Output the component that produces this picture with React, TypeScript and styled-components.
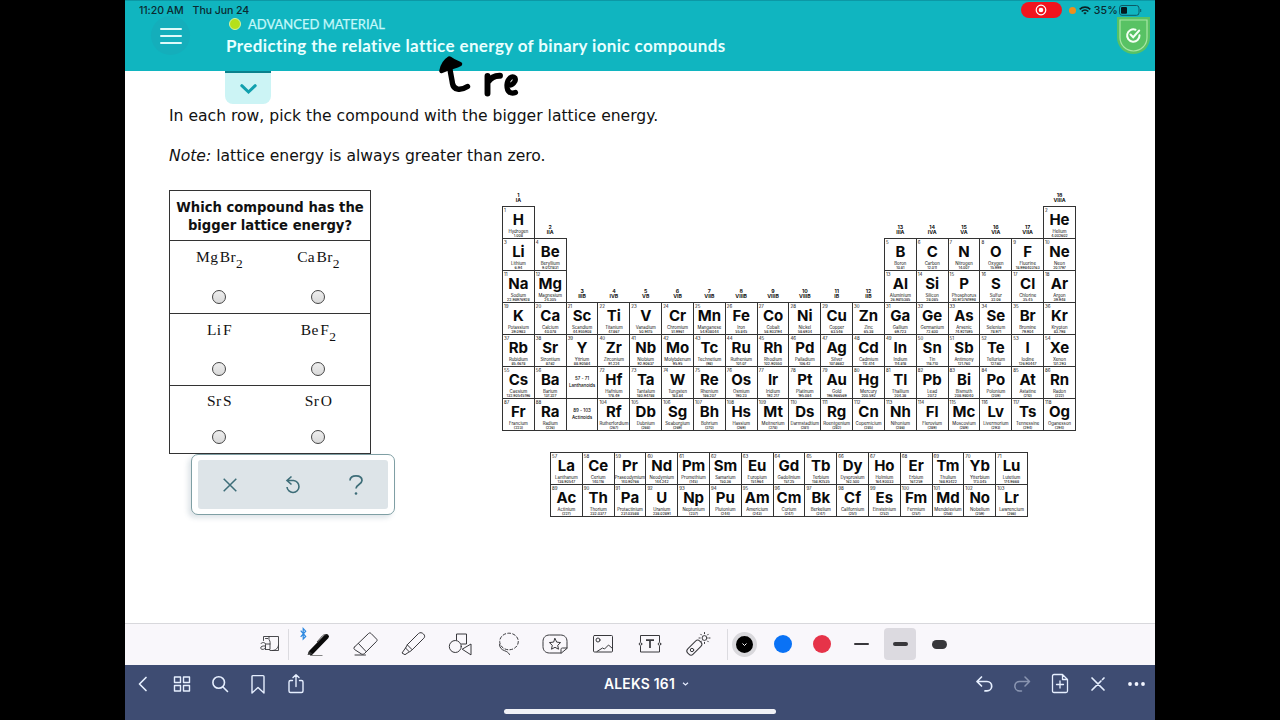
import React from 'react';
import styled, { createGlobalStyle } from 'styled-components';

const GlobalStyle = createGlobalStyle`
  * { box-sizing: border-box; }
  body { margin: 0; background: #000; }
  svg { display: block; overflow: visible; }
`;

const Screen = styled.div`
  width: 1280px;
  height: 720px;
  background: #000;
  display: flex;
  justify-content: center;
  overflow: hidden;
`;

const Tablet = styled.div`
  position: relative;
  width: 1030px;
  height: 720px;
  background: #fff;
  display: flex;
  flex-direction: column;
`;

/* ---------- header ---------- */

const Header = styled.header`
  height: 71px;
  flex: none;
  background: #10b5c0;
  border-top: 1px solid #0c98a5;
  color: #fff;
  font-family: Lato, sans-serif;
`;

const StatusBar = styled.div`
  display: flex;
  align-items: center;
  height: 18px;
  padding: 0 13px 0 14px;
  font: 500 10.6px Inter, sans-serif;
  letter-spacing: -0.1px;
  color: #0b2a30;
`;

const StatusDate = styled.span`
  margin-left: 9px;
  flex: 1;
`;

const RecordPill = styled.span`
  width: 41px;
  height: 16px;
  border-radius: 8px;
  background: #f0141e;
  display: flex;
  align-items: center;
  justify-content: center;
  margin-right: 7px;
`;

const MicDot = styled.span`
  width: 7px;
  height: 7px;
  border-radius: 50%;
  background: #ee8f1c;
  margin-right: 3px;
`;

const BatteryText = styled.span`
  margin: 0 1px 0 3px;
  letter-spacing: 0.2px;
`;

const TitleRow = styled.div`
  display: flex;
  margin-top: -2px;
  padding: 0 5px 0 26px;
`;

const MenuButton = styled.div`
  width: 39px;
  height: 39px;
  margin-top: -1px;
  border-radius: 50%;
  background: #14aebb;
  display: flex;
  flex-direction: column;
  align-items: center;
  justify-content: center;
  gap: 5px;
`;

const MenuLine = styled.span`
  width: 22px;
  height: 2px;
  border-radius: 1px;
  background: #dffafa;
`;

const Titles = styled.div`
  flex: 1;
  margin-left: 36px;
  padding-top: 0;
`;

const Kicker = styled.div`
  display: flex;
  align-items: center;
  height: 14px;
  padding-left: 3px;
  font-size: 13px;
  letter-spacing: 0;
  color: #c4f8fa;
  -webkit-text-stroke: 0.25px #c4f8fa;
`;

const LevelDot = styled.span`
  width: 12px;
  height: 12px;
  border-radius: 50%;
  background: #b5e01b;
  border: 1px solid #d5f3a0;
  margin-right: 7px;
`;

const Topic = styled.div`
  margin-top: 5px;
  font-size: 17px;
  line-height: 20px;
  font-weight: 700;
  letter-spacing: 0.37px;
  white-space: nowrap;
  color: #e8ffff;
`;

/* ---------- exercise ---------- */

const Exercise = styled.main`
  flex: 1;
  min-height: 0;
  padding-left: 44px;
  font-family: 'DejaVu Sans', Verdana, sans-serif;
  color: #111;
`;

const TopicTab = styled.div`
  width: 46px;
  height: 33px;
  margin-left: 56px;
  border-top: 2px solid #0b808c;
  border-radius: 0 0 8px 8px;
  background: #ccf4f5;
  display: flex;
  justify-content: center;
  padding-top: 11px;
`;

const Prompt = styled.p<{ $top: number }>`
  margin: ${(p) => p.$top}px 0 0;
  font-size: 15.6px;
  line-height: 20px;
  white-space: nowrap;
`;

const Work = styled.div`
  display: flex;
  align-items: flex-start;
  margin-top: 24px;
`;

const AnswerArea = styled.div`
  width: 333px;
  flex: none;
`;

const Question = styled.div`
  width: 202px;
  border: 1px solid #333;
`;

const QuestionHead = styled.div`
  height: 49px;
  padding-top: 8px;
  text-align: center;
  font-weight: 700;
  font-size: 13.2px;
  line-height: 18px;
  white-space: nowrap;
`;

const ChoiceRow = styled.div<{ $height: number; $pad: number }>`
  display: grid;
  grid-template-columns: 1fr 1fr;
  height: ${(p) => p.$height}px;
  padding: ${(p) => p.$pad}px 2px 0 0;
  border-top: 1px solid #333;
`;

const Choice = styled.label`
  display: flex;
  flex-direction: column;
  align-items: center;
  justify-content: space-between;
  padding-bottom: 9px;
`;

const Formula = styled.span`
  height: 22px;
  font: 15.5px/20px 'Liberation Serif', serif;
  letter-spacing: 0.3px;
  word-spacing: -2.6px;
  white-space: nowrap;
  display: flex;
  color: #111;
`;

const Subscript = styled.span`
  font-size: 13.5px;
  position: relative;
  top: 7px;
`;

const Radio = styled.span`
  width: 14px;
  height: 14px;
  margin-right: 1px;
  border-radius: 50%;
  border: 1px solid #444;
  background: linear-gradient(#eee, #d9d9d9);
`;

const Actions = styled.div`
  width: 204px;
  height: 61px;
  margin: 0 0 0 22px;
  padding: 5px 6px;
  border: 1px solid #7f9fa4;
  border-radius: 7px;
  background: #fff;
  box-shadow: -3px 3px 5px rgba(90, 120, 140, 0.2);
`;

const ActionsInner = styled.div`
  height: 49px;
  border-radius: 3px;
  background: #dde4e8;
  display: flex;
  align-items: center;
  justify-content: space-between;
  padding: 0 25px;
`;

/* ---------- periodic table ---------- */

const Tables = styled.div`
  padding-top: 1px;
  font-family: Inter, 'Liberation Sans', sans-serif;
`;

const MainTable = styled.div`
  display: grid;
  grid-template-columns: repeat(18, 31.83px);
  grid-template-rows: 15px repeat(7, 32.03px);
`;

const SeriesTable = styled.div`
  display: grid;
  grid-template-columns: repeat(15, 31.8px);
  grid-template-rows: repeat(2, 32px);
  margin: 22px 0 0 48px;
`;

const Cell = styled.div<{ $row: number; $col: number }>`
  grid-row: ${(p) => p.$row};
  grid-column: ${(p) => p.$col};
  position: relative;
  margin: 0 -1px -1px 0;
  border: 1px solid #333;
  display: flex;
  flex-direction: column;
  align-items: center;
  white-space: nowrap;
  color: #0a0a0a;
`;

const AtomicNumber = styled.span`
  position: absolute;
  left: 1px;
  top: 1px;
  font-size: 4.4px;
  line-height: 5px;
`;

const Sym = styled.span`
  margin: 6px 0 3px;
  font-size: 15px;
  line-height: 13px;
  font-weight: 650;
`;

const ElementName = styled.span`
  font-size: 4.3px;
  line-height: 5px;
`;

const Mass = styled.span`
  font-size: 3.5px;
  line-height: 4px;
  font-weight: 500;
`;

const RangeNote = styled.span`
  margin: auto;
  font-size: 4.5px;
  line-height: 6.2px;
  font-weight: 500;
  text-align: center;
`;

const GroupLabel = styled.div<{ $row: number; $col: number }>`
  grid-row: ${(p) => p.$row};
  grid-column: ${(p) => p.$col};
  align-self: end;
  padding: 0 0 2px 1px;
  text-align: center;
  font-size: 5.2px;
  line-height: 5.6px;
  font-weight: 700;
  color: #111;
`;

type Entry = { n: string; sym: string; name: string; mass: string; row: number; col: number };

function period(row: number, col: number, list: string): Entry[] {
  return list.split(';').map((s, i) => {
    const [n, sym, name, mass] = s.split(',');
    return { n, sym, name, mass, row, col: col + i };
  });
}

const mainElements: Entry[] = [
  ...period(2, 1, '1,H,Hydrogen,1.008'),
  ...period(2, 18, '2,He,Helium,4.002602'),
  ...period(3, 1, '3,Li,Lithium,6.94;4,Be,Beryllium,9.0121831'),
  ...period(3, 13, '5,B,Boron,10.81;6,C,Carbon,12.011;7,N,Nitrogen,14.007;8,O,Oxygen,15.999;9,F,Fluorine,18.998403163;10,Ne,Neon,20.1797'),
  ...period(4, 1, '11,Na,Sodium,22.98976928;12,Mg,Magnesium,24.305'),
  ...period(4, 13, '13,Al,Aluminium,26.9815385;14,Si,Silicon,28.085;15,P,Phosphorus,30.973761998;16,S,Sulfur,32.06;17,Cl,Chlorine,35.45;18,Ar,Argon,39.948'),
  ...period(5, 1, '19,K,Potassium,39.0983;20,Ca,Calcium,40.078;21,Sc,Scandium,44.955908;22,Ti,Titanium,47.867;23,V,Vanadium,50.9415;24,Cr,Chromium,51.9961;25,Mn,Manganese,54.938044;26,Fe,Iron,55.845;27,Co,Cobalt,58.933194;28,Ni,Nickel,58.6934;29,Cu,Copper,63.546;30,Zn,Zinc,65.38;31,Ga,Gallium,69.723;32,Ge,Germanium,72.630;33,As,Arsenic,74.921595;34,Se,Selenium,78.971;35,Br,Bromine,79.904;36,Kr,Krypton,83.798'),
  ...period(6, 1, '37,Rb,Rubidium,85.4678;38,Sr,Strontium,87.62;39,Y,Yttrium,88.90584;40,Zr,Zirconium,91.224;41,Nb,Niobium,92.90637;42,Mo,Molybdenum,95.95;43,Tc,Technetium,(98);44,Ru,Ruthenium,101.07;45,Rh,Rhodium,102.90550;46,Pd,Palladium,106.42;47,Ag,Silver,107.8682;48,Cd,Cadmium,112.414;49,In,Indium,114.818;50,Sn,Tin,118.710;51,Sb,Antimony,121.760;52,Te,Tellurium,127.60;53,I,Iodine,126.90447;54,Xe,Xenon,131.293'),
  ...period(7, 1, '55,Cs,Caesium,132.90545196;56,Ba,Barium,137.327'),
  ...period(7, 4, '72,Hf,Hafnium,178.49;73,Ta,Tantalum,180.94788;74,W,Tungsten,183.84;75,Re,Rhenium,186.207;76,Os,Osmium,190.23;77,Ir,Iridium,192.217;78,Pt,Platinum,195.084;79,Au,Gold,196.966569;80,Hg,Mercury,200.592;81,Tl,Thallium,204.38;82,Pb,Lead,207.2;83,Bi,Bismuth,208.98040;84,Po,Polonium,(209);85,At,Astatine,(210);86,Rn,Radon,(222)'),
  ...period(8, 1, '87,Fr,Francium,(223);88,Ra,Radium,(226)'),
  ...period(8, 4, '104,Rf,Rutherfordium,(267);105,Db,Dubnium,(268);106,Sg,Seaborgium,(269);107,Bh,Bohrium,(270);108,Hs,Hassium,(269);109,Mt,Meitnerium,(278);110,Ds,Darmstadtium,(281);111,Rg,Roentgenium,(282);112,Cn,Copernicium,(285);113,Nh,Nihonium,(286);114,Fl,Flerovium,(289);115,Mc,Moscovium,(289);116,Lv,Livermorium,(293);117,Ts,Tennessine,(294);118,Og,Oganesson,(294)'),
];

const seriesElements: Entry[] = [
  ...period(1, 1, '57,La,Lanthanum,138.90547;58,Ce,Cerium,140.116;59,Pr,Praseodymium,140.90766;60,Nd,Neodymium,144.242;61,Pm,Promethium,(145);62,Sm,Samarium,150.36;63,Eu,Europium,151.964;64,Gd,Gadolinium,157.25;65,Tb,Terbium,158.92535;66,Dy,Dysprosium,162.500;67,Ho,Holmium,164.93033;68,Er,Erbium,167.259;69,Tm,Thulium,168.93422;70,Yb,Ytterbium,173.045;71,Lu,Lutetium,174.9668'),
  ...period(2, 1, '89,Ac,Actinium,(227);90,Th,Thorium,232.0377;91,Pa,Protactinium,231.03588;92,U,Uranium,238.02891;93,Np,Neptunium,(237);94,Pu,Plutonium,(244);95,Am,Americium,(243);96,Cm,Curium,(247);97,Bk,Berkelium,(247);98,Cf,Californium,(251);99,Es,Einsteinium,(252);100,Fm,Fermium,(257);101,Md,Mendelevium,(258);102,No,Nobelium,(259);103,Lr,Lawrencium,(266)'),
];

const groups: [number, string, number][] = [
  [1, 'IA', 1], [2, 'IIA', 2], [3, 'IIIB', 4], [4, 'IVB', 4], [5, 'VB', 4], [6, 'VIB', 4],
  [7, 'VIIB', 4], [8, 'VIIIB', 4], [9, 'VIIIB', 4], [10, 'VIIIB', 4], [11, 'IB', 4], [12, 'IIB', 4],
  [13, 'IIIA', 2], [14, 'IVA', 2], [15, 'VA', 2], [16, 'VIA', 2], [17, 'VIIA', 2], [18, 'VIIIA', 1],
];

const ElementCell = ({ e }: { e: Entry }) => (
  <Cell $row={e.row} $col={e.col}>
    <AtomicNumber>{e.n}</AtomicNumber>
    <Sym>{e.sym}</Sym>
    <ElementName>{e.name}</ElementName>
    <Mass>{e.mass}</Mass>
  </Cell>
);

const PeriodicTable = () => (
  <Tables>
    <MainTable>
      {groups.map(([n, roman, row]) => (
        <GroupLabel key={n} $row={row} $col={n}>{n}<br />{roman}</GroupLabel>
      ))}
      {mainElements.map((e) => <ElementCell key={e.n} e={e} />)}
      <Cell $row={7} $col={3}><RangeNote>57 - 71<br />Lanthanoids</RangeNote></Cell>
      <Cell $row={8} $col={3}><RangeNote>89 - 103<br />Actinoids</RangeNote></Cell>
    </MainTable>
    <SeriesTable>
      {seriesElements.map((e) => <ElementCell key={e.n} e={e} />)}
    </SeriesTable>
  </Tables>
);

/* ---------- drawing toolbar ---------- */

const ToolBar = styled.div`
  height: 42px;
  flex: none;
  border-top: 1px solid #d8d8dc;
  background: #f9f7fb;
  display: flex;
  align-items: center;
  padding: 0 0 1px 121px;
`;

const Tool = styled.div<{ $width?: number }>`
  width: ${(p) => p.$width ?? 47.5}px;
  height: 40px;
  display: flex;
  align-items: center;
  justify-content: center;
  flex: none;
`;

const Divider = styled.span<{ $left: number; $right: number }>`
  width: 1px;
  height: 31px;
  flex: none;
  margin: 0 ${(p) => p.$right}px 0 ${(p) => p.$left}px;
  background: #dcdbe0;
`;

const Swatch = styled.span<{ $color: string; $selected?: boolean }>`
  width: ${(p) => (p.$selected ? 25 : 18)}px;
  height: ${(p) => (p.$selected ? 25 : 18)}px;
  border-radius: 50%;
  border: ${(p) => (p.$selected ? '4px solid #d9d8dc' : '0')};
  background: ${(p) => p.$color};
  display: flex;
  align-items: center;
  justify-content: center;
`;

const WidthButton = styled.span<{ $selected?: boolean }>`
  width: 32px;
  height: 32px;
  border-radius: 4px;
  background: ${(p) => (p.$selected ? '#dcdae0' : 'transparent')};
  display: flex;
  align-items: center;
  justify-content: center;
`;

const Stroke = styled.span<{ $size: number }>`
  width: 15px;
  height: ${(p) => p.$size}px;
  border-radius: ${(p) => p.$size / 2}px;
  background: #38373b;
`;

const thin = { fill: 'none', stroke: '#38383c', strokeWidth: 1, strokeLinecap: 'round', strokeLinejoin: 'round' } as const;

const ZoomWindowIcon = () => (
  <svg width="20" height="20" viewBox="0 0 20 20" {...thin} strokeWidth="0.9">
    <path d="M3.500 6.500V2.500H18.500V16.500H10" />
    <path d="M12.500 16.500c3 0 6-2.500 6-5.500" />
    <path d="M1 9.500c.8-1.500 4.500-1.500 4.500 1v5M5.500 12c-3-.3-4.800.4-4.800 2 0 2 4.200 2 4.800-.4M5.500 4.500h2.500c2 1.500 2.300 3.500 2 5.500v5.500h-4.500M5.500 10h4.500M9 4.500V2.500" />
  </svg>
);

const PenIcon = () => (
  <svg width="34" height="36" viewBox="0 0 34 36">
    <path d="M-.3 4.700l5 5.800L2.200 13V2.500l2.500 2.700-5 5.600" fill="none" stroke="#2a87e0" strokeWidth="1.200" />
    <path d="M10 26.500L25.500 10.500" stroke="#0a0a0a" strokeWidth="4.800" strokeLinecap="round" />
    <path d="M6.500 29l1.500-4 4 3z" fill="#333" />
    <path d="M16 16l5.500-6.200c1-1 2.500-1.300 4-.8" fill="none" stroke="#444" strokeWidth="1" />
    <path d="M9 29.500H21.500" stroke="#777" strokeWidth="0.900" />
  </svg>
);

const EraserIcon = () => (
  <svg width="26" height="26" viewBox="0 0 26 26" {...thin}>
    <path d="M2.500 16L16.500 2.500c.8-.8 1.800-.8 2.600 0L24.500 8c.8.800.8 1.600 0 2.400L12.500 22.500c-1.200 1-2.400 1-3.500.2L2.500 18.500c-.8-.8-.8-1.700 0-2.500zM6.500 12.500l7.500 8M3 24H13.500" />
  </svg>
);

const HighlighterIcon = () => (
  <svg width="26" height="26" viewBox="0 0 26 26" {...thin}>
    <path d="M7.500 13.500L18.500 2.500c1.500-1.300 3.500-1 5 .5 1.500 1.500 1.500 3 .3 4.200L12.500 18.500zM7.500 13.500l-2 3.500 4 4 3-2.500M5.500 17l-3.500 5 3 1.700 4-2.700" />
  </svg>
);

const ShapesIcon = () => (
  <svg width="24" height="24" viewBox="0 0 24 24" {...thin}>
    <path d="M8.500 8V2H18.500V12H13.500" />
    <circle cx="7.300" cy="14.500" r="6" />
    <path d="M14.500 17l8.500-5v10.500z" />
  </svg>
);

const LassoIcon = () => (
  <svg width="22" height="24" viewBox="0 0 22 24" {...thin}>
    <ellipse cx="12" cy="9.500" rx="9.300" ry="8.300" strokeDasharray="2.800 2.200" />
    <path d="M2.500 12.500c0 3 1.800 5 5 6.200 2.500.8 4 2 5 3.800" />
  </svg>
);

const StickerIcon = () => (
  <svg width="26" height="22" viewBox="0 0 26 22" {...thin}>
    <path d="M19 20H7.500C3.500 20 1 17.500 1 13.500v-5C1 4.500 3.500 2 7.500 2h11C22.500 2 25 4.500 25 8.500V15zM19 20v-3.500c0-1 .5-1.500 1.500-1.500H25" />
    <path d="M13 5.500l1.700 3.600 3.900.5-2.900 2.700.8 3.900-3.500-1.900-3.500 1.900.8-3.900-2.900-2.700 3.900-.5z" />
  </svg>
);

const ImageIcon = () => (
  <svg width="22" height="20" viewBox="0 0 22 20" {...thin}>
    <rect x="1.500" y="1.500" width="19" height="16.500" rx="1" />
    <circle cx="6" cy="6" r="2" />
    <path d="M5 17.500l5.500-3.500 2 1 4-4 4 3.500" />
  </svg>
);

const TextIcon = () => (
  <svg width="24" height="20" viewBox="0 0 24 20" {...thin}>
    <path d="M2.500 7.500V1.500H21.500V7.500M2.500 12.500V18H21.500V12.500" />
    <circle cx="2.500" cy="10" r="1.300" />
    <circle cx="21.500" cy="10" r="1.300" />
    <path d="M8 6.200H16M12 6.200V14" strokeWidth="1.700" strokeLinecap="butt" />
  </svg>
);

const LaserIcon = () => (
  <svg width="26" height="26" viewBox="0 0 26 26" {...thin}>
    <rect x="-8" y="-3.800" width="17" height="7.600" rx="3" transform="translate(9 17) rotate(-45)" />
    <circle cx="7" cy="19" r="1.700" />
    <circle cx="19.500" cy="7" r="2.400" />
    <path d="M19.500 1.500v1.200M19.500 11.300v1.200M14 7h1.200M23.800 7H25M15.700 3.200l.8.800M22.500 10l.8.800M15.700 10.800l.8-.8M22.500 4l.8-.8" />
  </svg>
);

/* ---------- navigation bar ---------- */

const NavBar = styled.nav`
  height: 55px;
  flex: none;
  background: #3e4c72;
  display: flex;
  flex-direction: column;
  align-items: center;
`;

const NavRow = styled.div`
  width: 100%;
  height: 38px;
  display: grid;
  grid-template-columns: 1fr auto 1fr;
  align-items: center;
`;

const NavGroup = styled.div<{ $end?: boolean }>`
  display: flex;
  justify-content: ${(p) => (p.$end ? 'flex-end' : 'flex-start')};
`;

const NavButton = styled.span<{ $dim?: boolean }>`
  width: 38px;
  height: 38px;
  display: flex;
  align-items: center;
  justify-content: center;
  opacity: ${(p) => (p.$dim ? 0.45 : 1)};
`;

const DocumentTitle = styled.div`
  display: flex;
  align-items: center;
  gap: 7px;
  padding-left: 13px;
  font: 600 13.8px Inter, sans-serif;
  letter-spacing: 0.25px;
  color: #fff;
  white-space: nowrap;
`;

const HomeIndicator = styled.span`
  width: 272px;
  height: 5px;
  margin-top: 6px;
  border-radius: 3px;
  background: #f0f1f6;
`;

const NavIcon = ({ d, width = 1.4 }: { d: string; width?: number }) => (
  <svg width="20" height="22" viewBox="0 0 20 22" fill="none" stroke="#e6efff" strokeWidth={width} strokeLinecap="round" strokeLinejoin="round">
    <path d={d} />
  </svg>
);

/* ---------- handwriting ---------- */

const Ink = styled.svg`
  position: absolute;
  left: 310px;
  top: 50px;
`;

const Compound = ({ text, sub }: { text: string; sub?: string }) => (
  <Choice>
    <Formula>{text}{sub && <Subscript>{sub}</Subscript>}</Formula>
    <Radio />
  </Choice>
);

export default function App() {
  return (
    <Screen>
      <GlobalStyle />
      <Tablet>
        <Header>
          <StatusBar>
            <span>11:20 AM</span>
            <StatusDate>Thu Jun 24</StatusDate>
            <RecordPill>
              <svg width="12" height="12" viewBox="0 0 12 12">
                <circle cx="6" cy="6" r="4.800" fill="none" stroke="#fff" strokeWidth="1.200" />
                <circle cx="6" cy="6" r="2.300" fill="#fff" />
              </svg>
            </RecordPill>
            <MicDot />
            <svg width="12" height="9" viewBox="0 0 12 9" fill="none" stroke="#0b2024" strokeWidth="1.700">
              <path d="M.7 3.300c3-2.900 7.600-2.900 10.600 0M2.700 5.500c1.900-1.800 4.700-1.800 6.600 0" />
              <path d="M6 8.600L4.300 7c1-.9 2.400-.9 3.400 0z" fill="#0b2024" stroke="none" />
            </svg>
            <BatteryText>35%</BatteryText>
            <svg width="23" height="11" viewBox="0 0 23 11">
              <rect x=".5" y=".5" width="19.500" height="9.800" rx="2.500" fill="none" stroke="#0c5a64" />
              <rect x="2" y="2" width="6" height="6.800" rx="1" fill="#061a1e" />
              <path d="M21.700 4v3" stroke="#0c5a64" />
            </svg>
          </StatusBar>
          <TitleRow>
            <MenuButton><MenuLine /><MenuLine /><MenuLine /></MenuButton>
            <Titles>
              <Kicker><LevelDot />ADVANCED MATERIAL</Kicker>
              <Topic>Predicting the relative lattice energy of binary ionic compounds</Topic>
            </Titles>
            <svg width="33" height="37" viewBox="0 0 33 37">
              <path d="M0 0h33v20.500a16.500 16.500 0 0 1-33 0z" fill="#58c264" />
              <path d="M3 3h27v17.500a13.500 13.500 0 0 1-27 0z" fill="none" stroke="#a8e6a4" strokeWidth="1.200" />
              <path d="M18.500 12.700a6.200 6.200 0 1 0 4 5.500" fill="none" stroke="#f4fff4" strokeWidth="2" strokeLinecap="round" />
              <path d="M13.500 17.500l2.700 2.700 6-6.700" fill="none" stroke="#f4fff4" strokeWidth="2" strokeLinecap="round" />
            </svg>
          </TitleRow>
        </Header>

        <Exercise>
          <TopicTab>
            <svg width="17" height="10" viewBox="0 0 17 10">
              <path d="M1.800 1.700L8.500 8l6.700-6.300" fill="none" stroke="#11a0ae" strokeWidth="3" strokeLinecap="round" />
            </svg>
          </TopicTab>
          <Prompt $top={2}>In each row, pick the compound with the bigger lattice energy.</Prompt>
          <Prompt $top={20}><i>Note:</i> lattice energy is always greater than zero.</Prompt>
          <Work>
            <AnswerArea>
              <Question>
                <QuestionHead>Which compound has the<br />bigger lattice energy?</QuestionHead>
                <ChoiceRow $height={73} $pad={6}>
                  <Compound text="Mg Br" sub="2" />
                  <Compound text="Ca Br" sub="2" />
                </ChoiceRow>
                <ChoiceRow $height={72} $pad={6}>
                  <Compound text="Li F" />
                  <Compound text="Be F" sub="2" />
                </ChoiceRow>
                <ChoiceRow $height={68} $pad={5}>
                  <Compound text="Sr S" />
                  <Compound text="Sr O" />
                </ChoiceRow>
              </Question>
              <Actions>
                <ActionsInner>
                  <svg width="14" height="14" viewBox="0 0 14 14" fill="none" stroke="#3d6d78" strokeWidth="1.500">
                    <path d="M.7.7l12.600 12.600M13.300.7L.7 13.300" />
                  </svg>
                  <svg width="16" height="18" viewBox="0 0 16 18" fill="none" stroke="#3d6d78" strokeWidth="1.600">
                    <path d="M2.500 4.500H8.500a6 6 0 1 1-6.500 6.500M6.500.5l-4.500 4 4.500 4" />
                  </svg>
                  <svg width="14" height="20" viewBox="0 0 14 20" fill="none" stroke="#3d6d78" strokeWidth="1.700">
                    <path d="M1 5.500C1 2.500 3.500.8 7 .8s6 1.700 6 4.700c0 4-6 4-6 8" />
                    <circle cx="7" cy="18.500" r="1.300" fill="#3d6d78" stroke="none" />
                  </svg>
                </ActionsInner>
              </Actions>
            </AnswerArea>
            <PeriodicTable />
          </Work>
        </Exercise>

        <ToolBar>
          <Tool $width={47}><ZoomWindowIcon /></Tool>
          <Divider $left={-5} $right={5} />
          <Tool><PenIcon /></Tool>
          <Tool><EraserIcon /></Tool>
          <Tool><HighlighterIcon /></Tool>
          <Tool><ShapesIcon /></Tool>
          <Tool><LassoIcon /></Tool>
          <Tool><StickerIcon /></Tool>
          <Tool><ImageIcon /></Tool>
          <Tool><TextIcon /></Tool>
          <Tool><LaserIcon /></Tool>
          <Divider $left={5} $right={-3} />
          <Tool $width={39}>
            <Swatch $color="#000" $selected>
              <svg width="5" height="3" viewBox="0 0 5 3"><path d="M.5.5l2 2 2-2" fill="none" stroke="#fff" /></svg>
            </Swatch>
          </Tool>
          <Tool $width={39}><Swatch $color="#0a72f5" /></Tool>
          <Tool $width={39}><Swatch $color="#e63349" /></Tool>
          <Tool $width={39}><WidthButton><Stroke $size={2} /></WidthButton></Tool>
          <Tool $width={39}><WidthButton $selected><Stroke $size={4} /></WidthButton></Tool>
          <Tool $width={39}><WidthButton><Stroke $size={9} /></WidthButton></Tool>
        </ToolBar>

        <NavBar>
          <NavRow>
            <NavGroup>
              <NavButton><NavIcon width={1.700} d="M12 4.500L5.500 11l6.500 6.500" /></NavButton>
              <NavButton><NavIcon d="M2.500 4h6v5.500h-6zM11.500 4h6v5.500h-6zM2.500 12.500h6v5.500h-6zM11.500 12.500h6v5.500h-6z" /></NavButton>
              <NavButton><NavIcon width={1.600} d="M14.500 9.500a5.800 5.800 0 1 1-11.600 0a5.800 5.800 0 1 1 11.600 0zM13 14l4.500 4.500" /></NavButton>
              <NavButton><NavIcon d="M4 3.500c0-.5.500-.9 1-.9h10c.5 0 1 .4 1 .9V20l-6-5.500L4 20z" /></NavButton>
              <NavButton><NavIcon d="M6.500 7.500H4.500c-1 0-1.500.5-1.500 1.500v9c0 1 .5 1.500 1.500 1.500h11c1 0 1.500-.5 1.500-1.500V9c0-1-.5-1.500-1.500-1.500H13.500M10 13.500V2M7 4.500L10 1.700l3 2.800" /></NavButton>
            </NavGroup>
            <DocumentTitle>
              ALEKS 161
              <svg width="7" height="4" viewBox="0 0 7 4"><path d="M1 .7l2.500 2.300L6 .7" fill="none" stroke="#e6ecff" strokeWidth="1.200" /></svg>
            </DocumentTitle>
            <NavGroup $end>
              <NavButton><NavIcon width={1.700} d="M7.500 4L3 8.500 7.500 13M3 8.500h10a4.700 4.700 0 0 1 0 9.400h-2" /></NavButton>
              <NavButton $dim><NavIcon width={1.500} d="M13 4l4.500 4.500-4.500 4.500M17.500 8.500h-10a4.700 4.700 0 0 0 0 9.400h2" /></NavButton>
              <NavButton><NavIcon width={1.300} d="M4 1.500h8.500l5 5v11.500c0 1-.5 1.500-1.500 1.500H4c-1 0-1.500-.5-1.500-1.500V3C2.500 2 3 1.500 4 1.500zM12.500 1.500v5h5M10 8v7M6.500 11.500h7" /></NavButton>
              <NavButton><NavIcon width={1.700} d="M4 5l12 12M16 5l-1.500 1.500M13 8L4 17" /></NavButton>
              <NavButton>
                <svg width="17" height="4" viewBox="0 0 17 4" fill="#f2f5ff">
                  <circle cx="2" cy="2" r="1.900" /><circle cx="8.500" cy="2" r="1.900" /><circle cx="15" cy="2" r="1.900" />
                </svg>
              </NavButton>
            </NavGroup>
          </NavRow>
          <HomeIndicator />
        </NavBar>

        <Ink width="90" height="50" viewBox="435 50 90 50" fill="none" stroke="#000" strokeWidth="5.500" strokeLinecap="round" strokeLinejoin="round">
          <path d="M441.500 71c1-5.500 4-10 8-12.500 2.500 2 6.500 4 10.500 5.500-4.500 2.500-10 3-18.500 7z" fill="#000" strokeWidth="4.500" />
          <path d="M449 63c1 8 2.500 14 3.500 20.500 1 6.500 8 7.500 15 3" strokeWidth="5.400" />
          <path d="M487.500 76v17.500M488 82c2.500-4 6-6.500 12-6.300" strokeWidth="5.900" />
          <path d="M508 85.500c4.500 0 8.500-4 7-7.500-3-3.500-7.500 1-8 6.500-.5 8 4 9.500 8.500 8" strokeWidth="5.200" />
        </Ink>
      </Tablet>
    </Screen>
  );
}
